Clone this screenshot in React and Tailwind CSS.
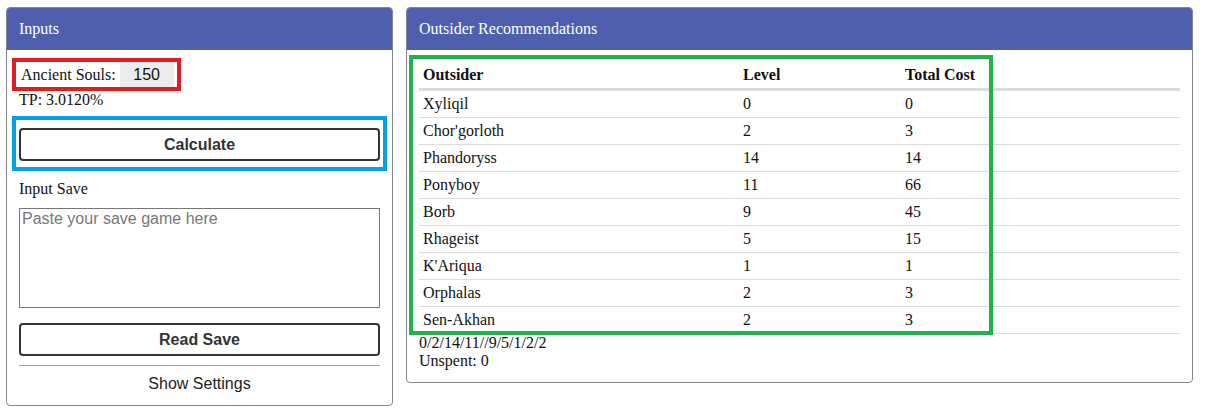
import React from 'react'

const outsiders = [
  { name: 'Xyliqil', level: 0, cost: 0 },
  { name: "Chor'gorloth", level: 2, cost: 3 },
  { name: 'Phandoryss', level: 14, cost: 14 },
  { name: 'Ponyboy', level: 11, cost: 66 },
  { name: 'Borb', level: 9, cost: 45 },
  { name: 'Rhageist', level: 5, cost: 15 },
  { name: "K'Ariqua", level: 1, cost: 1 },
  { name: 'Orphalas', level: 2, cost: 3 },
  { name: 'Sen-Akhan', level: 2, cost: 3 },
]

const serif = "font-['Liberation_Serif','Times_New_Roman',serif]"
const sans = "font-['Liberation_Sans',Arial,sans-serif]"

const Panel = ({ title, className, children }) => (
  <div className={`border border-[#858590] rounded-[4px] bg-white overflow-hidden ${className}`}>
    <div className="bg-[#4f5fad] text-white px-3 py-3 text-[16px] leading-[18px]">
      {title}
    </div>
    <div className="px-3 pt-3 pb-3">{children}</div>
  </div>
)

export default function App() {
  return (
    <div className={`min-h-screen bg-white ${serif} text-[16px] leading-[18px] text-[#111]`}>
      <div className="flex items-start gap-[13px] pl-[6px] pt-[7px]">
        {/* Inputs */}
        <Panel title="Inputs" className="w-[387px] shrink-0">
          <div className="flex flex-col items-start">
            <div className="inline-flex items-center -ml-[7px] -mt-[4px] border-4 border-[#e31b23] pl-[5px] pr-[3px]">
              <span>Ancient Souls:</span>
              <input
                type="text"
                defaultValue="150"
                className={`ml-[4px] w-[54px] h-[25px] bg-[#ececec] text-center outline-none ${sans} text-[16px]`}
              />
            </div>
            <div className="mt-0">TP: 3.0120%</div>
          </div>

          <div className="mt-[7px] -mx-[7px] border-4 border-[#00a2e8] px-[3px] pt-2 pb-[6px]">
            <button className={`w-full h-[33px] border-2 border-[#333] rounded-[4px] bg-white font-bold text-[#333] ${sans}`}>
              Calculate
            </button>
          </div>

          <div className="mt-[9px]">Input Save</div>
          <textarea
            placeholder="Paste your save game here"
            className={`mt-[10px] block w-full h-[100px] border border-[#767676] px-[2px] py-[1px] resize-none outline-none ${sans} text-[16px] placeholder:text-[#777]`}
          />

          <button className={`mt-[15px] w-full h-[33px] border-2 border-[#333] rounded-[4px] bg-white font-bold text-[#333] ${sans}`}>
            Read Save
          </button>
          <div className="mt-[9px] border-t border-[#a0a0a0]" />
          <div className={`mt-[9px] text-center text-[#222] ${sans}`}>Show Settings</div>
        </Panel>

        {/* Outsider Recommendations */}
        <Panel title="Outsider Recommendations" className="w-[787px] shrink-0">
          <div className="relative">
            <table className="w-full border-collapse text-left">
              <thead>
                <tr className="border-b-[3px] border-[#dcdcdc]">
                  <th className="w-[320px] px-1 py-1 font-bold">Outsider</th>
                  <th className="w-[162px] px-1 py-1 font-bold">Level</th>
                  <th className="px-1 py-1 font-bold">Total Cost</th>
                </tr>
              </thead>
              <tbody>
                {outsiders.map((o) => (
                  <tr key={o.name} className="border-b border-[#dcdcdc]">
                    <td className="px-1 py-1 h-[26px]">{o.name}</td>
                    <td className="px-1 py-1">{o.level}</td>
                    <td className="px-1 py-1">{o.cost}</td>
                  </tr>
                ))}
              </tbody>
            </table>
            <div className="absolute -left-[10px] -top-[7px] w-[584px] h-[280px] border-4 border-[#22b14c] pointer-events-none" />
          </div>
          <div className="mt-0">0/2/14/11//9/5/1/2/2</div>
          <div>Unspent: 0</div>
        </Panel>
      </div>
    </div>
  )
}
